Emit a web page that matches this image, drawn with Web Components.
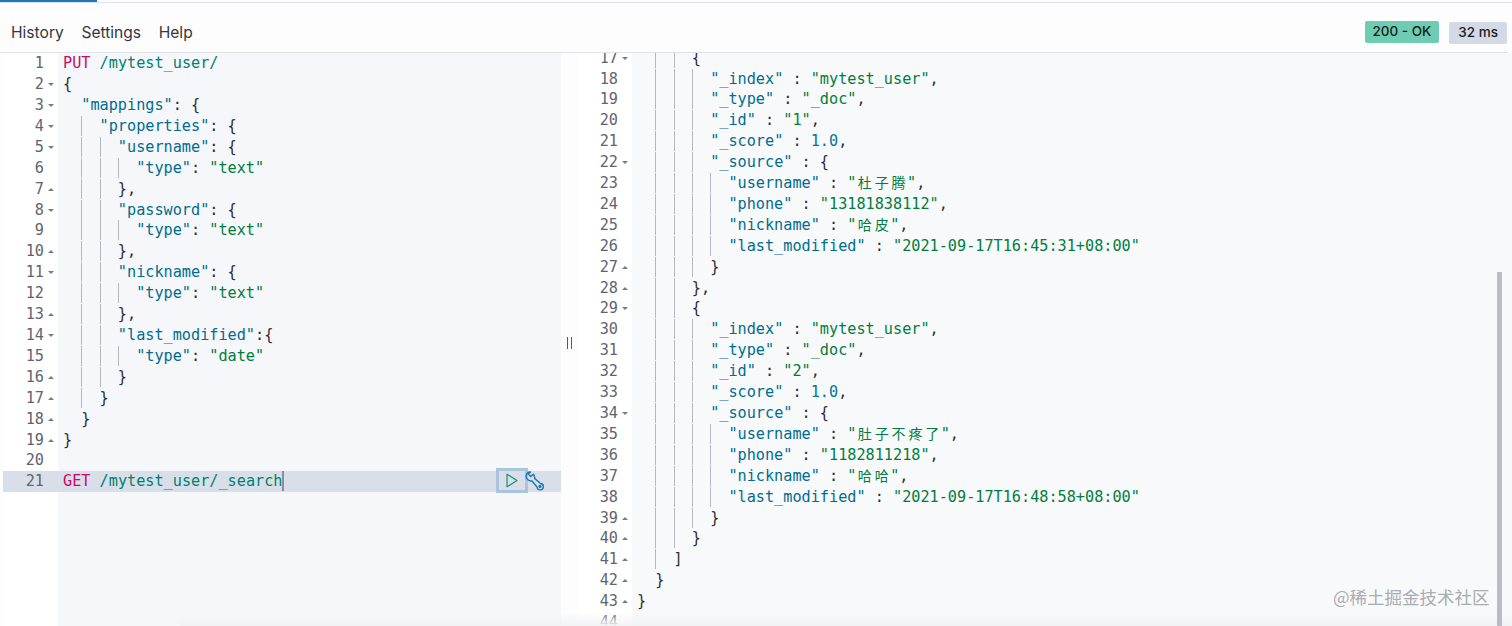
<!DOCTYPE html>
<html lang="en">
<head>
<meta charset="utf-8">
<title>Console</title>
<style>
  html, body { margin: 0; height: 100%; background: #fdfdfe; overflow: hidden; }
</style>
</head>
<body>
<es-console>
  <es-topbar slot="top">
    <a slot="menu">History</a>
    <a slot="menu">Settings</a>
    <a slot="menu">Help</a>
    <es-badge slot="status" kind="ok">200 - OK</es-badge>
    <es-badge slot="status" kind="time">32 ms</es-badge>
  </es-topbar>
  <es-editor slot="request" source="request" first="1" active="21"><es-actions></es-actions></es-editor>
  <es-editor slot="response" source="response" first="17" shift="-5.4" tint="#f8f9fb"></es-editor>
  <es-watermark slot="mark">@稀土掘金技术社区</es-watermark>
</es-console>

<script>
const sources = {
  request: `PUT /mytest_user/
{
  "mappings": {
    "properties": {
      "username": {
        "type": "text"
      },
      "password": {
        "type": "text"
      },
      "nickname": {
        "type": "text"
      },
      "last_modified":{
        "type": "date"
      }
    }
  }
}

GET /mytest_user/_search`,
  response: `      {
        "_index" : "mytest_user",
        "_type" : "_doc",
        "_id" : "1",
        "_score" : 1.0,
        "_source" : {
          "username" : "杜子腾",
          "phone" : "13181838112",
          "nickname" : "哈皮",
          "last_modified" : "2021-09-17T16:45:31+08:00"
        }
      },
      {
        "_index" : "mytest_user",
        "_type" : "_doc",
        "_id" : "2",
        "_score" : 1.0,
        "_source" : {
          "username" : "肚子不疼了",
          "phone" : "1182811218",
          "nickname" : "哈哈",
          "last_modified" : "2021-09-17T16:48:58+08:00"
        }
      }
    ]
  }
}
`
};

const esc = s => s.replace(/&/g, '&amp;').replace(/</g, '&lt;');
// cjk glyphs sit on a two column cell in the ace editor
const cells = s => esc(s).replace(/[\u4e00-\u9fff]/g, c => `<span class="cjk">${c}</span>`);

function highlight(text) {
  const method = text.match(/^(PUT|GET) (.*)$/);
  if (method) {
    return `<span class="method">${method[1]}</span> <span class="url">${esc(method[2])}</span>`;
  }
  const indent = text.match(/^ */)[0].length;
  let html = '';
  for (let i = 0; i < indent; i += 2) {
    html += i === 0 ? '<span class="in"></span>' : '<span class="in guide"></span>';
  }
  const re = /("[^"]*")(\s*:)?|(\d+\.\d+)|([^"\d]+)/g;
  let m;
  const rest = text.slice(indent);
  while ((m = re.exec(rest))) {
    if (m[1]) {
      html += m[2] ? `<span class="key">${esc(m[1])}</span>${m[2]}` : `<span class="str">${cells(m[1])}</span>`;
    } else if (m[3]) {
      html += `<span class="num">${m[3]}</span>`;
    } else {
      html += esc(m[4]);
    }
  }
  return html;
}

class EsConsole extends HTMLElement {
  constructor() {
    super();
    this.attachShadow({ mode: 'open' }).innerHTML = `
      <style>
        :host { display: flex; flex-direction: column; height: 626px; width: 1512px; position: relative; overflow: hidden; }
        .progress { height: 3px; flex: none; box-sizing: border-box; border-bottom: 1px solid #dde1e7; }
        .progress div { width: 97px; height: 2px; background: #1b77b6; }
        main { flex: 1; display: flex; min-height: 0; padding-left: 3px; }
        .left { width: 558px; flex: none; }
        .split { width: 16px; flex: none; display: flex; justify-content: center; padding-top: 284px; box-sizing: border-box; }
        .split i { width: 5px; height: 12px; box-sizing: border-box; border-left: 1px solid #555a63; border-right: 1px solid #555a63; }
        .right { flex: 1; min-width: 0; }
        ::slotted([slot="request"]), ::slotted([slot="response"]) { height: 100%; }
        .bar { position: absolute; left: 1497px; top: 272px; bottom: 0; width: 5px; background: #b9bcc3; }
        .shade { position: absolute; left: 180px; right: 0; bottom: 0; height: 14px; background: linear-gradient(#f5f6f900, #f2f3f6); pointer-events: none; }
      </style>
      <div class="progress"><div></div></div>
      <slot name="top"></slot>
      <main>
        <div class="left"><slot name="request"></slot></div>
        <div class="split"><i></i></div>
        <div class="right"><slot name="response"></slot></div>
      </main>
      <div class="shade"></div>
      <div class="bar"></div>
      <slot name="mark"></slot>`;
  }
}

class EsTopbar extends HTMLElement {
  constructor() {
    super();
    this.attachShadow({ mode: 'open' }).innerHTML = `
      <style>
        :host { display: flex; flex: none; height: 50px; box-sizing: border-box; align-items: center; justify-content: space-between;
          margin-right: 4px; padding: 9px 1px 0 11px; border-bottom: 1px solid #dfe2e7; font: 15.6px Inter, "Liberation Sans", sans-serif; color: #343741; }
        nav { display: flex; gap: 17.6px; }
        .status { display: flex; gap: 10px; align-items: flex-start; margin-top: 0; }
      </style>
      <nav><slot name="menu"></slot></nav>
      <div class="status"><slot name="status"></slot></div>`;
  }
}

class EsBadge extends HTMLElement {
  constructor() {
    super();
    this.attachShadow({ mode: 'open' }).innerHTML = `
      <style>
        :host { display: block; height: 22px; padding: 0 8px; border-radius: 2px; font: 500 13.5px/21px Inter, "Liberation Sans", sans-serif; color: #1a1c21; background: #d3dae6; }
        :host([kind="ok"]) { background: #6dccb1; }
        :host([kind="time"]) { margin-top: 1px; padding: 0 9px; }
      </style>
      <slot></slot>`;
  }
}

class EsEditor extends HTMLElement {
  connectedCallback() {
    const first = Number(this.getAttribute('first'));
    const active = Number(this.getAttribute('active'));
    const shift = Number(this.getAttribute('shift') || 0.2);
    const tint = this.getAttribute('tint') || '#f5f7fa';
    const lines = sources[this.getAttribute('source')].split('\n');
    let gutter = '';
    let code = '';
    lines.forEach((text, i) => {
      const n = first + i;
      const on = n === active ? ' active' : '';
      const t = text.trim();
      const fold = /[{[]$/.test(t) ? 'down' : /^[}\]]/.test(t) ? 'up' : '';
      gutter += `<div class="num-row${on}">${n}<i class="${fold}"></i></div>`;
      code += `<div class="line${on}">${highlight(text)}${on ? '<span class="cursor"></span>' : ''}${on ? '<slot></slot>' : ''}</div>`;
    });
    this.attachShadow({ mode: 'open' }).innerHTML = `
      <style>
        :host { display: flex; overflow: hidden; font: 15.2px/20.9px "DejaVu Sans Mono", "Noto Sans CJK SC", monospace; color: #2b2e36; }
        .gutter { width: 55px; flex: none; background: #fff; color: #5f6570; padding-top: ${Math.max(0, shift)}px; margin-top: ${Math.min(0, shift)}px; }
        .code { flex: 1; min-width: 0; padding-top: ${Math.max(0, shift)}px; margin-top: ${Math.min(0, shift)}px; padding-bottom: 60px; background: ${tint}; }
        .num-row { height: 20.92px; box-sizing: border-box; padding-right: 14px; text-align: right; position: relative; white-space: nowrap; }
        .num-row i { position: absolute; left: 44.5px; top: 9px; width: 0; height: 0; border-left: 3.5px solid transparent; border-right: 3.5px solid transparent; }
        .num-row i.down { border-top: 3.5px solid #777c85; }
        .num-row i.up { border-bottom: 3.5px solid #777c85; }
        .line { height: 20.92px; padding-left: 5px; white-space: pre; position: relative; }
        .active { background: #d9dfe8; }
        .in { display: inline-block; width: 2ch; height: 20px; vertical-align: top; box-sizing: border-box; }
        .guide { border-left: 1px solid #b4b8c0; }
        .method { color: #c80a68; }
        .url { color: #00806f; }
        .key { color: #006d8f; }
        .str { color: #017d3d; }
        .num { color: #00769a; }
        .cjk { display: inline-block; width: 2ch; text-align: center; font-size: 14px; line-height: 20px; }
        .cursor { display: inline-block; width: 1.5px; height: 20px; vertical-align: top; background: #8a8f98; }
      </style>
      <div class="gutter">${gutter}</div>
      <div class="code">${code}</div>`;
  }
}

class EsActions extends HTMLElement {
  constructor() {
    super();
    this.attachShadow({ mode: 'open' }).innerHTML = `
      <style>
        :host { position: absolute; right: 16px; top: -3px; display: flex; align-items: center; height: 25px; }
        .play { width: 32px; height: 25px; box-sizing: border-box; border: 3px solid #a9c5dc; display: flex; align-items: center; justify-content: center; }
        svg { display: block; }
        .wrench { margin-left: -3px; }
      </style>
      <div class="play">
        <svg width="12" height="15" viewBox="0 0 12 15"><path d="M1 1.2 L11 7.5 L1 13.8 Z" fill="none" stroke="#1f8a78" stroke-width="1.2" stroke-linejoin="round"/></svg>
      </div>
      <svg class="wrench" width="20" height="20" viewBox="0 0 20 20" fill="none" stroke="#1b77b6" stroke-width="1.4" stroke-linejoin="round" stroke-linecap="round">
        <path d="M5.5 1 L3.4 3.1 L5.6 5.6 L8.4 3.3 C9.4 4.6 9.8 6 9.6 7.4 L15.5 12.5 A3.2 3.2 0 1 1 12 16 L7 10 C4 10.5 1 8 1 5 C1 3 3.5 .6 5.5 1 Z"/>
        <circle cx="15" cy="15.4" r=".9"/>
      </svg>`;
  }
}

class EsWatermark extends HTMLElement {
  constructor() {
    super();
    this.attachShadow({ mode: 'open' }).innerHTML = `
      <style>
        :host { position: absolute; left: 1333px; top: 585px; font: 17.5px/24px "Noto Sans CJK SC", sans-serif; color: #a9acb2; white-space: nowrap; }
      </style>
      <slot></slot>`;
  }
}

customElements.define('es-console', EsConsole);
customElements.define('es-topbar', EsTopbar);
customElements.define('es-badge', EsBadge);
customElements.define('es-editor', EsEditor);
customElements.define('es-actions', EsActions);
customElements.define('es-watermark', EsWatermark);
</script>
</body>
</html>
